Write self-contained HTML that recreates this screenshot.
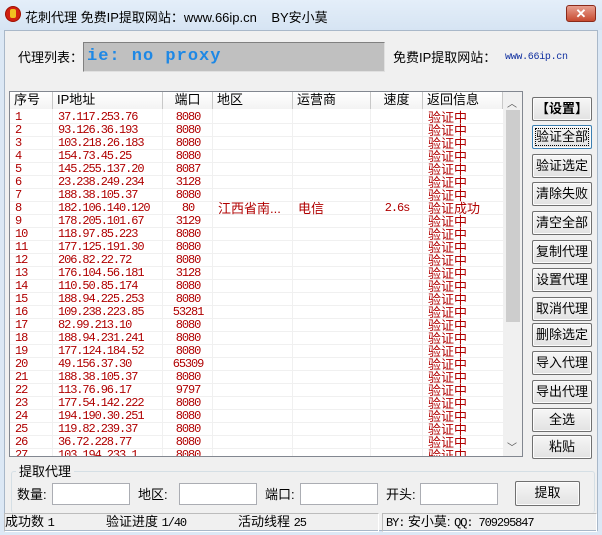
<!DOCTYPE html>
<html><head><meta charset="utf-8"><style>
*{margin:0;padding:0;box-sizing:border-box}
body{width:602px;height:535px;position:relative;overflow:hidden;background:#dce8f5;font-family:"Liberation Sans","Noto Sans CJK SC",sans-serif;font-size:12px;color:#000}
.a{position:absolute}
#title{left:0;top:0;width:602px;height:30px;background:linear-gradient(#e4eef9,#d6e4f3)}
#body{left:4px;top:30px;width:594px;height:501px;background:#f0f0f0;border:1px solid #a9b8c9}
.btn{position:absolute;left:532px;width:60px;height:24px;background:linear-gradient(#f6f6f6,#e2e2e2);border:1px solid #707070;border-radius:2px;text-align:center;line-height:22px;font-size:13px;box-shadow:inset 0 0 0 1px #fcfcfc}
.mono{font-family:"Liberation Mono","Noto Sans CJK SC",monospace;font-size:12px;letter-spacing:-1.1px}
.r{position:absolute;left:0;width:493px;height:13px;border-bottom:1px solid #f0f0f0;color:#b00000}
.r span{position:absolute;top:0;height:13px;line-height:13px;white-space:nowrap;font-family:"Liberation Mono",monospace;font-size:12px;letter-spacing:-1.1px}
.r .n{left:5px}.r .i{left:48px}.r .p{left:153px;width:50px;text-align:center}
.r .m{font-family:"Liberation Sans","Noto Sans CJK SC",sans-serif;font-size:13px;letter-spacing:0;left:418px}
.vl{position:absolute;top:17px;width:1px;height:348px;background:#f0f0f0}
.hd{position:absolute;top:0;height:17px;border-right:1px solid #c8c8c8;font-size:13px;line-height:16px;padding-left:4px;background:linear-gradient(#fff,#f3f3f3)}
.inp{position:absolute;top:483px;width:78px;height:22px;background:#fff;border:1px solid #abadb3}
.lbl{position:absolute;font-size:13px;line-height:16px;white-space:nowrap}
</style></head><body>
<div id="title" class="a"></div>
<div class="a" style="left:6px;top:7px;width:14px;height:14px;border-radius:50%;background:#d02010;box-shadow:0 0 0 1px #a01000"></div>
<div class="a" style="left:10px;top:9px;width:6px;height:9px;background:#f0c020;border-radius:2px"></div>
<div class="a" style="left:25px;top:7px;font-size:13px">花刺代理 免费IP提取网站：www.66ip.cn&nbsp;&nbsp;&nbsp;&nbsp;BY安小莫</div>
<div class="a" style="left:566px;top:5px;width:30px;height:17px;background:linear-gradient(#e8a090,#c74a30);border:1px solid #8a2a1a;border-radius:3px;color:#fff;font-weight:bold;text-align:center;line-height:15px;font-size:13px">✕</div>
<div id="body" class="a"></div>

<div class="lbl" style="left:18px;top:50px">代理列表：</div>
<div class="a" style="left:83px;top:42px;width:302px;height:30px;background:#c0c0c0;border:1px solid #808080;border-right-color:#e0e0e0;border-bottom-color:#e0e0e0;color:#1e88e5;font-family:'Liberation Mono',monospace;font-weight:bold;font-size:17px;line-height:28px;padding-left:3px;letter-spacing:1px">ie: no proxy</div>
<div class="lbl" style="left:393px;top:50px">免费IP提取网站：</div>
<div class="a mono" style="left:505px;top:52px;color:#1030a0;font-size:10px;letter-spacing:-0.3px">www.66ip.cn</div>

<div class="a" style="left:9px;top:91px;width:514px;height:366px;border:1px solid #828790;background:#fff;overflow:hidden">
 <div class="vl" style="left:42px"></div><div class="vl" style="left:152px"></div><div class="vl" style="left:202px"></div><div class="vl" style="left:282px"></div><div class="vl" style="left:360px"></div><div class="vl" style="left:412px"></div>
 <div class="a" style="left:0;top:2px;width:493px;height:370px">
 <div class="r" style="top:17px"><span class="n">1</span><span class="i">37.117.253.76</span><span class="p">8080</span><span class="m">验证中</span></div>
 <div class="r" style="top:30px"><span class="n">2</span><span class="i">93.126.36.193</span><span class="p">8080</span><span class="m">验证中</span></div>
 <div class="r" style="top:43px"><span class="n">3</span><span class="i">103.218.26.183</span><span class="p">8080</span><span class="m">验证中</span></div>
 <div class="r" style="top:56px"><span class="n">4</span><span class="i">154.73.45.25</span><span class="p">8080</span><span class="m">验证中</span></div>
 <div class="r" style="top:69px"><span class="n">5</span><span class="i">145.255.137.20</span><span class="p">8087</span><span class="m">验证中</span></div>
 <div class="r" style="top:82px"><span class="n">6</span><span class="i">23.238.249.234</span><span class="p">3128</span><span class="m">验证中</span></div>
 <div class="r" style="top:95px"><span class="n">7</span><span class="i">188.38.105.37</span><span class="p">8080</span><span class="m">验证中</span></div>
 <div class="r" style="top:108px"><span class="n">8</span><span class="i">182.106.140.120</span><span class="p">80</span><span class="m" style="left:208px">江西省南...</span><span class="m" style="left:288px">电信</span><span style="left:362px;width:50px;text-align:center">2.6s</span><span class="m">验证成功</span></div>
 <div class="r" style="top:121px"><span class="n">9</span><span class="i">178.205.101.67</span><span class="p">3129</span><span class="m">验证中</span></div>
 <div class="r" style="top:134px"><span class="n">10</span><span class="i">118.97.85.223</span><span class="p">8080</span><span class="m">验证中</span></div>
 <div class="r" style="top:147px"><span class="n">11</span><span class="i">177.125.191.30</span><span class="p">8080</span><span class="m">验证中</span></div>
 <div class="r" style="top:160px"><span class="n">12</span><span class="i">206.82.22.72</span><span class="p">8080</span><span class="m">验证中</span></div>
 <div class="r" style="top:173px"><span class="n">13</span><span class="i">176.104.56.181</span><span class="p">3128</span><span class="m">验证中</span></div>
 <div class="r" style="top:186px"><span class="n">14</span><span class="i">110.50.85.174</span><span class="p">8080</span><span class="m">验证中</span></div>
 <div class="r" style="top:199px"><span class="n">15</span><span class="i">188.94.225.253</span><span class="p">8080</span><span class="m">验证中</span></div>
 <div class="r" style="top:212px"><span class="n">16</span><span class="i">109.238.223.85</span><span class="p">53281</span><span class="m">验证中</span></div>
 <div class="r" style="top:225px"><span class="n">17</span><span class="i">82.99.213.10</span><span class="p">8080</span><span class="m">验证中</span></div>
 <div class="r" style="top:238px"><span class="n">18</span><span class="i">188.94.231.241</span><span class="p">8080</span><span class="m">验证中</span></div>
 <div class="r" style="top:251px"><span class="n">19</span><span class="i">177.124.184.52</span><span class="p">8080</span><span class="m">验证中</span></div>
 <div class="r" style="top:264px"><span class="n">20</span><span class="i">49.156.37.30</span><span class="p">65309</span><span class="m">验证中</span></div>
 <div class="r" style="top:277px"><span class="n">21</span><span class="i">188.38.105.37</span><span class="p">8080</span><span class="m">验证中</span></div>
 <div class="r" style="top:290px"><span class="n">22</span><span class="i">113.76.96.17</span><span class="p">9797</span><span class="m">验证中</span></div>
 <div class="r" style="top:303px"><span class="n">23</span><span class="i">177.54.142.222</span><span class="p">8080</span><span class="m">验证中</span></div>
 <div class="r" style="top:316px"><span class="n">24</span><span class="i">194.190.30.251</span><span class="p">8080</span><span class="m">验证中</span></div>
 <div class="r" style="top:329px"><span class="n">25</span><span class="i">119.82.239.37</span><span class="p">8080</span><span class="m">验证中</span></div>
 <div class="r" style="top:342px"><span class="n">26</span><span class="i">36.72.228.77</span><span class="p">8080</span><span class="m">验证中</span></div>
 <div class="r" style="top:355px"><span class="n">27</span><span class="i">103.194.233.1</span><span class="p">8080</span><span class="m">验证中</span></div>
 </div>
 <div class="hd" style="left:0;width:43px">序号</div>
 <div class="hd" style="left:43px;width:110px">IP地址</div>
 <div class="hd" style="left:153px;width:50px;text-align:center;padding:0">端口</div>
 <div class="hd" style="left:203px;width:80px">地区</div>
 <div class="hd" style="left:283px;width:78px">运营商</div>
 <div class="hd" style="left:361px;width:52px;text-align:center;padding:0">速度</div>
 <div class="hd" style="left:413px;width:80px">返回信息</div>
 <div class="a" style="left:493px;top:0;width:19px;height:364px;background:#f0f0f0"></div>
 <div class="a" style="left:497px;top:3px;font-size:10px;color:#555">︿</div>
 <div class="a" style="left:496px;top:18px;width:14px;height:212px;background:#cdcdcd"></div>
 <div class="a" style="left:497px;top:347px;font-size:10px;color:#555">﹀</div>
</div>

<div class="btn" style="top:97px;font-weight:bold">【设置】</div>
<div class="btn" style="top:125px;outline:1px dotted #000;outline-offset:-4px;border-color:#3c7fb1">验证全部</div>
<div class="btn" style="top:154px">验证选定</div>
<div class="btn" style="top:182px">清除失败</div>
<div class="btn" style="top:211px">清空全部</div>
<div class="btn" style="top:240px">复制代理</div>
<div class="btn" style="top:268px">设置代理</div>
<div class="btn" style="top:297px">取消代理</div>
<div class="btn" style="top:323px">删除选定</div>
<div class="btn" style="top:351px">导入代理</div>
<div class="btn" style="top:380px">导出代理</div>
<div class="btn" style="top:408px">全选</div>
<div class="btn" style="top:435px">粘贴</div>

<div class="a" style="left:11px;top:471px;width:584px;height:42px;border:1px solid #d5dfe5;border-bottom:none;border-radius:3px"></div>
<div class="lbl" style="left:16px;top:464px;background:#f0f0f0;padding:0 3px">提取代理</div>
<div class="lbl" style="left:17px;top:487px">数量:</div>
<div class="inp" style="left:52px"></div>
<div class="lbl" style="left:138px;top:487px">地区:</div>
<div class="inp" style="left:179px"></div>
<div class="lbl" style="left:265px;top:487px">端口:</div>
<div class="inp" style="left:300px"></div>
<div class="lbl" style="left:386px;top:487px">开头:</div>
<div class="inp" style="left:420px"></div>
<div class="btn" style="left:515px;top:481px;width:65px;height:25px">提取</div>

<div class="a" style="left:4px;top:513px;width:375px;height:19px;border:1px solid #bcbcbc;border-right-color:#fff;border-bottom-color:#fff"></div>
<div class="a" style="left:382px;top:513px;width:215px;height:19px;border:1px solid #bcbcbc;border-right-color:#fff;border-bottom-color:#fff"></div>
<div class="lbl" style="left:5px;top:514px">成功数 <span class="mono">1</span></div>
<div class="lbl" style="left:106px;top:514px">验证进度 <span class="mono">1/40</span></div>
<div class="lbl" style="left:238px;top:514px">活动线程 <span class="mono">25</span></div>
<div class="lbl" style="left:386px;top:514px"><span class="mono">BY:</span> 安小莫: <span class="mono">QQ: 709295847</span></div>
</body></html>
